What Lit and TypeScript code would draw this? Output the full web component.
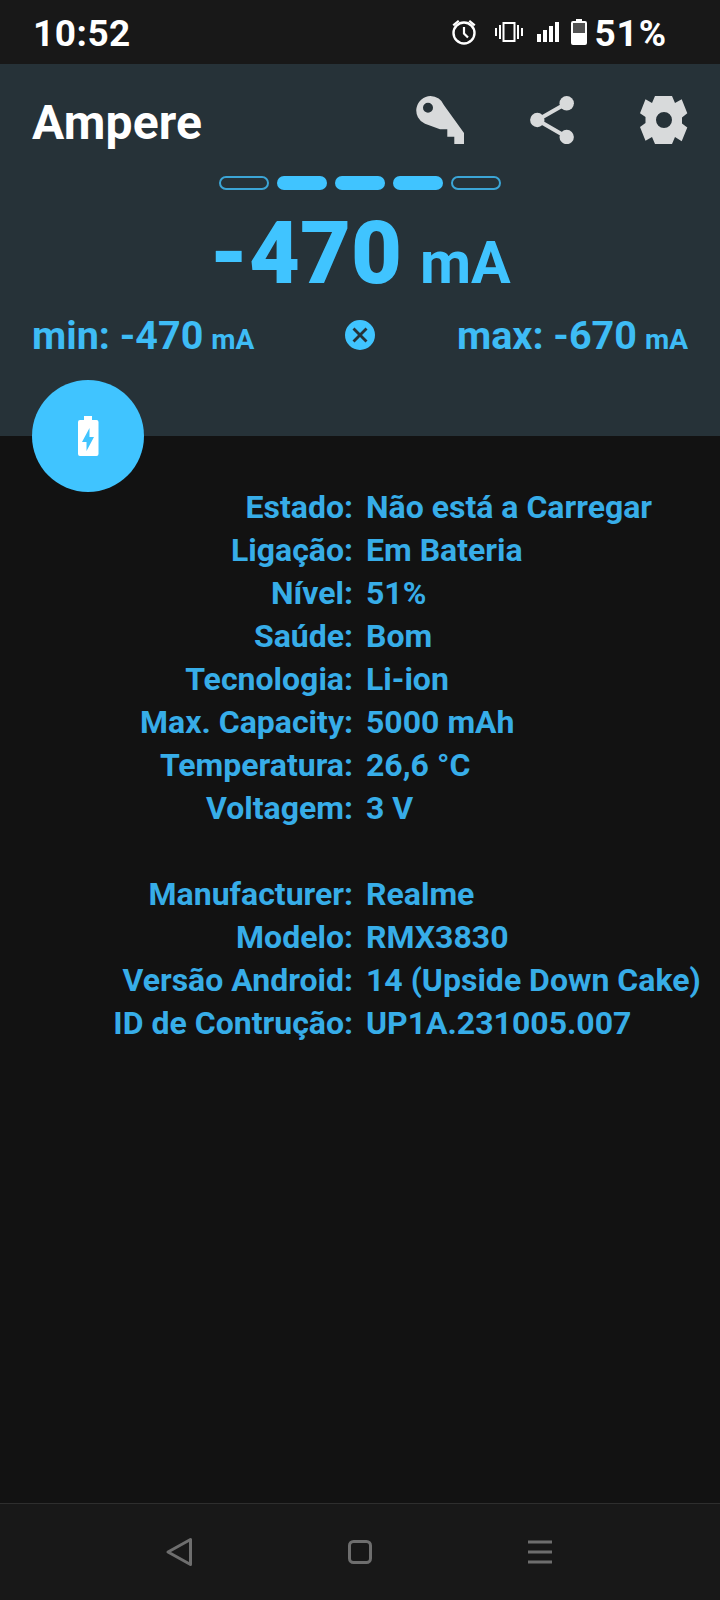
import { LitElement, html, css } from "lit";
import { customElement } from "lit/decorators.js";

const block1 = [
  ["Estado:", "Não está a Carregar"],
  ["Ligação:", "Em Bateria"],
  ["Nível:", "51%"],
  ["Saúde:", "Bom"],
  ["Tecnologia:", "Li-ion"],
  ["Max. Capacity:", "5000 mAh"],
  ["Temperatura:", "26,6 °C"],
  ["Voltagem:", "3 V"],
];
const block2 = [
  ["Manufacturer:", "Realme"],
  ["Modelo:", "RMX3830"],
  ["Versão Android:", "14 (Upside Down Cake)"],
  ["ID de Contrução:", "UP1A.231005.007"],
];

@customElement("app-root")
export class AppRoot extends LitElement {
  static styles = css`
    :host { display: block; width: 720px; height: 1600px; background: #121212; font-family: Roboto, "Noto Sans", sans-serif; position: relative; overflow: hidden; }
    .page { display: flex; flex-direction: column; height: 1600px; }
    .status { height: 64px; background: #181818; display: flex; align-items: center; padding: 4px 53px 0 33px; color: #fff; font-weight: 700; flex: none; box-sizing: border-box; }
    .time { font-size: 37px; line-height: 60px; flex: 1; letter-spacing: 0.5px; }
    .status svg { display: block; fill: #fff; }
    .pct { font-size: 37px; line-height: 60px; margin-left: 7px; letter-spacing: 0.9px; }
    .sicons { display: flex; align-items: center; margin-top: -4px; }
    .sicons .alarm { margin-right: 17px; }
    .sicons .vib { margin-right: 14px; }
    .sicons .sig { margin-right: 12px; }
    .head { height: 372px; background: #263238; flex: none; padding: 0 32px; box-sizing: border-box; position: relative; }
    .bar { display: flex; align-items: center; height: 112px; }
    .title { flex: 1; color: #fff; font-size: 48px; font-weight: 700; padding-top: 4px; letter-spacing: 0.2px; }
    .actions { display: flex; gap: 64px; align-items: center; }
    .actions svg { width: 48px; height: 48px; fill: #d8dadb; stroke: none; display: block; }
    .seg { display: flex; justify-content: center; gap: 8px; }
    .seg i { width: 50px; height: 14px; border-radius: 7px; box-sizing: border-box; background: #40c4ff; }
    .seg i.off { background: transparent; border: 2px solid #3ba5d6; }
    .big { display: flex; justify-content: center; align-items: baseline; color: #40c4ff; font-weight: 700; margin-top: 15px; height: 96px; line-height: 96px; }
    .big b { font-size: 88px; }
    .big span { font-size: 59px; margin-left: 18px; }
    .mm { display: flex; align-items: center; justify-content: space-between; color: #3ebcf5; font-weight: 700; font-size: 39.5px; height: 50px; margin-top: 9px; }
    .mm small { font-size: 28px; margin-left: 8px; }
    .mm svg { width: 32px; height: 32px; fill: #40c4ff; display: block; }
    .mm .side { width: 262px; flex: none; }
    .mm .side.r { text-align: right; }
    .fab { position: absolute; left: 32px; top: 316px; width: 112px; height: 112px; border-radius: 50%; background: #40c4ff; display: flex; align-items: center; justify-content: center; }
    .fab svg { width: 48px; height: 48px; fill: #fff; display: block; }
    .list { flex: 1; padding-top: 50px; color: #37ade8; font-size: 32px; font-weight: 700; line-height: 43px; display: grid; grid-template-columns: 353px 1fr; column-gap: 13px; align-content: start; white-space: nowrap; }
    .k { text-align: right; }
    .sp { grid-column: 1 / 3; height: 43px; }
    .nav { height: 97px; flex: none; background: #181818; border-top: 1px solid #2e2e2e; box-sizing: border-box; display: flex; align-items: center; padding-left: 163px; gap: 148.5px; }
    .nav svg { width: 32px; height: 32px; fill: none; stroke: #6e6e6e; stroke-width: 3; display: block; }
  `;

  render() {
    return html`<div class="page">
      <div class="status">
        <div class="time">10:52</div>
        <div class="sicons">
          <svg class="alarm" width="28" height="28" viewBox="0 0 28 28">
            <circle cx="14" cy="15" r="10.5" fill="none" stroke="#fff" stroke-width="2.4"/>
            <path d="M14 9v6.5l4 4" fill="none" stroke="#fff" stroke-width="2.2"/>
            <path d="M2.500 6.500 8 2l1.500 1.600L4 8.200zM25.500 6.500 20 2l-1.500 1.600L24 8.200z"/>
          </svg>
          <svg class="vib" width="28" height="20" viewBox="0 0 28 20">
            <path d="M8.500 1h11v18h-11z" fill="none" stroke="#fff" stroke-width="2"/>
            <path d="M0 6h2v8H0zM4 3h2v14H4zM22 3h2v14h-2zM26 6h2v8h-2z"/>
          </svg>
          <svg class="sig" width="22" height="20" viewBox="0 0 22 20">
            <path d="M0 12h4v8H0zM6 8h4v12H6zM12 4h4v16h-4zM18 0h4v20h-4z"/>
          </svg>
          <svg width="16" height="26" viewBox="0 0 16 26">
            <path d="M5 0h6v2h3a2 2 0 0 1 2 2v20a2 2 0 0 1-2 2H2a2 2 0 0 1-2-2V4a2 2 0 0 1 2-2h3z"/>
            <path d="M2 4h12v10H2z" fill="#181818" opacity=".75"/>
          </svg>
        </div>
        <div class="pct">51%</div>
      </div>
      <div class="head">
        <div class="bar">
          <div class="title">Ampere</div>
          <div class="actions">
            <svg viewBox="0 0 48 48"><path fill-rule="evenodd" d="M14.500 0a14.500 14.500 0 0 1 13.500 9.200L48 37v11H38.300v-7.300h-7v-7.400H24L9 27.800A14.500 14.500 0 0 1 14.500 0zM12 6.700a5 5 0 1 0 0 10 5 5 0 0 0 0-10z"/></svg>
            <svg viewBox="0 0 48 48">
              <circle cx="38.700" cy="7.300" r="7.200"/><circle cx="9.300" cy="24" r="7.200"/><circle cx="38.700" cy="41" r="7.200"/>
              <path d="M38.700 7.300 9.300 24l29.400 17" fill="none" stroke="#d8dadb" stroke-width="4"/>
            </svg>
            <svg viewBox="0 0 48 48"><path fill-rule="evenodd" d="M15 0h17l3 7 6.700-3.700 5.600 14-5.300 4.200v6l5.300 4-5.600 13.700L35 41l-3 7H15l-3-7-6.500 3.700L0 31l5.500-4v-6L0 17.300 5.500 3.300 12 7zm9 16a8 8 0 1 0 0 16 8 8 0 0 0 0-16z"/></svg>
          </div>
        </div>
        <div class="seg"><i class="off"></i><i></i><i></i><i></i><i class="off"></i></div>
        <div class="big"><b>-470</b><span>mA</span></div>
        <div class="mm">
          <div class="side">min: -470<small>mA</small></div>
          <svg viewBox="0 0 32 32"><path fill-rule="evenodd" d="M16 1a15 15 0 1 1 0 30 15 15 0 0 1 0-30zm-5.500 7.500-2 2 5.500 5.500-5.500 5.500 2 2 5.500-5.500 5.500 5.500 2-2-5.500-5.500 5.500-5.500-2-2-5.500 5.500z"/></svg>
          <div class="side r">max: -670<small>mA</small></div>
        </div>
        <div class="fab"><svg viewBox="0 0 48 48"><path fill-rule="evenodd" d="M20 4h8v4h4.500a2 2 0 0 1 2 2v32a2 2 0 0 1-2 2H16a2 2 0 0 1-2-2V10a2 2 0 0 1 2-2h4zm5.500 12L18 30h4.500v9L30 25h-4.500z"/></svg></div>
      </div>
      <div class="list">
        ${block1.map(([k, v]) => html`<div class="k">${k}</div><div>${v}</div>`)}
        <div class="sp"></div>
        ${block2.map(([k, v]) => html`<div class="k">${k}</div><div>${v}</div>`)}
      </div>
      <div class="nav">
        <svg viewBox="0 0 32 32"><path d="M5 16 27.500 3.500v25z" stroke-linejoin="round"/></svg>
        <svg viewBox="0 0 32 32"><rect x="5.500" y="5.500" width="21" height="21" rx="4"/></svg>
        <svg viewBox="0 0 32 32"><path d="M4 6h24M4 16h24M4 26h24"/></svg>
      </div>
    </div>`;
  }
}
